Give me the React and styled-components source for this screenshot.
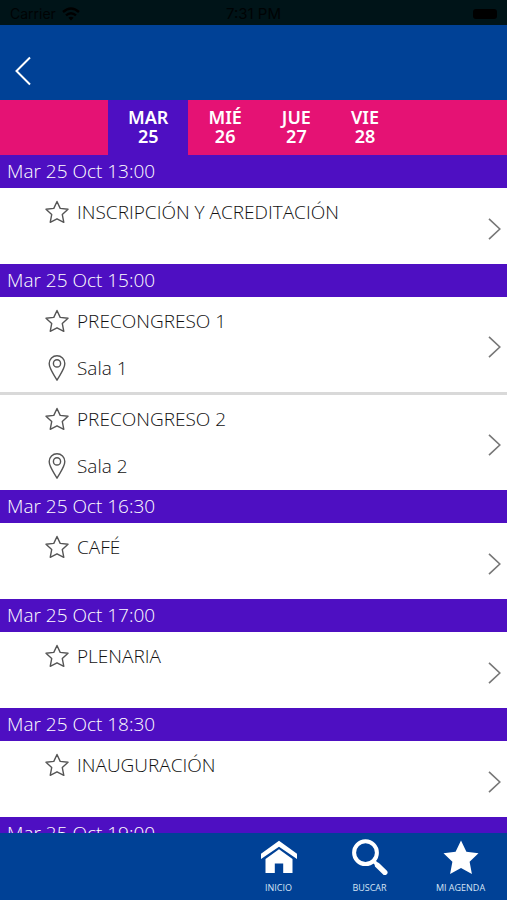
import React, { useState } from "react";
import styled, { createGlobalStyle } from "styled-components";

const days = [
  { name: "MAR", number: 25 },
  { name: "MIÉ", number: 26 },
  { name: "JUE", number: 27 },
  { name: "VIE", number: 28 },
];

const agenda = [
  { time: "Mar 25 Oct 13:00", events: [{ title: "INSCRIPCIÓN Y ACREDITACIÓN" }] },
  {
    time: "Mar 25 Oct 15:00",
    events: [
      { title: "PRECONGRESO 1", room: "Sala 1" },
      { title: "PRECONGRESO 2", room: "Sala 2" },
    ],
  },
  { time: "Mar 25 Oct 16:30", events: [{ title: "CAFÉ" }] },
  { time: "Mar 25 Oct 17:00", events: [{ title: "PLENARIA" }] },
  { time: "Mar 25 Oct 18:30", events: [{ title: "INAUGURACIÓN" }] },
  { time: "Mar 25 Oct 19:00", events: [] },
];

const StarOutline = () => (
  <svg width="24" height="24" viewBox="0 0 24 24" fill="none" stroke="#555" strokeWidth="1.4" strokeLinejoin="round">
    <path d="M12 1.5 L15.2 8.4 L23 9.3 L17.3 14.6 L18.8 22.3 L12 18.8 L5.2 22.3 L6.7 14.6 L1 9.3 L8.8 8.4 Z" />
  </svg>
);

const Pin = () => (
  <svg width="24" height="26" viewBox="0 0 24 26" fill="none" stroke="#555" strokeWidth="1.4" strokeLinejoin="round">
    <path d="M12 25.2 C9 19.5 4.2 14 4.2 8.6 A7.8 7.8 0 0 1 19.8 8.6 C19.8 14 15 19.5 12 25.2 Z" />
    <circle cx="12" cy="8.4" r="3.6" />
  </svg>
);

const HomeIcon = () => (
  <svg width="36" height="36" viewBox="0 0 36 36" fill="#fff">
    <path d="M18 1.8 L36 14.8 V20 L18 7.8 L0 20 V14.8 Z" />
    <path d="M18 10.2 L31.5 20 V34 H22.2 V24.6 H13.8 V34 H4.5 V20 Z" />
  </svg>
);

const SearchIcon = () => (
  <svg width="36" height="36" viewBox="0 0 36 36" fill="none" stroke="#fff">
    <circle cx="13.5" cy="13.7" r="11.4" strokeWidth="4" />
    <path d="M21.5 22 L25 25.6" strokeWidth="3.6" />
    <path d="M25.6 26.4 L32.8 33.4" strokeWidth="5.4" strokeLinecap="round" />
  </svg>
);

const StarIcon = () => (
  <svg width="36" height="36" viewBox="0 0 36 36" fill="#fff">
    <path d="M18 1.5 L23.4 12.8 L35.5 14.3 L26.6 22.7 L28.9 35 L18 29 L7.1 35 L9.4 22.7 L0.5 14.3 L12.6 12.8 Z" />
  </svg>
);

const App = () => {
  const [selected, setSelected] = useState(25);

  return (
    <React.Fragment>
      <GlobalStyle />
      <Screen>
        <StatusBar>
          <Carrier>
            <span>Carrier</span>
            <svg width="18" height="14" viewBox="0 0 18 14" fill="none" stroke="#000" strokeWidth="2.4">
              <path d="M1 5 Q9 -2 17 5" />
              <path d="M4 8.4 Q9 4 14 8.4" />
              <path d="M9 13.5 L6.4 10.8 Q9 8.6 11.6 10.8 Z" fill="#000" stroke="none" />
            </svg>
          </Carrier>
          <Clock>7:31 PM</Clock>
          <BatteryWrap>
            <Battery />
          </BatteryWrap>
        </StatusBar>

        <Header>
          <BackButton aria-label="Volver">
            <svg width="16" height="30" viewBox="0 0 16 30" fill="none" stroke="#fff" strokeWidth="2">
              <path d="M15 1.5 L1.5 15 L15 28.5" />
            </svg>
          </BackButton>
        </Header>

        <Days>
          {days.map((day) => (
            <Day
              key={day.number}
              $active={day.number === selected}
              onClick={() => setSelected(day.number)}
            >
              {day.name}
              <br />
              {day.number}
            </Day>
          ))}
        </Days>

        <Agenda>
          {agenda.map((slot) => (
            <section key={slot.time}>
              <Time>{slot.time}</Time>
              {slot.events.map((event) => (
                <Event key={event.title}>
                  <Details>
                    <Line>
                      <Favorite aria-label={`Favorito ${event.title}`}>
                        <StarOutline />
                      </Favorite>
                      <span>{event.title}</span>
                    </Line>
                    {event.room && (
                      <Line>
                        <Pin />
                        <span>{event.room}</span>
                      </Line>
                    )}
                  </Details>
                  <More href="#" aria-label={event.title}>
                    <svg width="13" height="22" viewBox="0 0 13 22" fill="none" stroke="#777" strokeWidth="1.6">
                      <path d="M1 0.8 L11.8 11 L1 21.2" />
                    </svg>
                  </More>
                </Event>
              ))}
            </section>
          ))}
        </Agenda>

        <BottomNav>
          <NavLink href="#">
            <HomeIcon />
            <span>INICIO</span>
          </NavLink>
          <NavLink href="#">
            <SearchIcon />
            <span>BUSCAR</span>
          </NavLink>
          <NavLink href="#">
            <StarIcon />
            <span>MI AGENDA</span>
          </NavLink>
        </BottomNav>
      </Screen>
    </React.Fragment>
  );
};

export default App;

const GlobalStyle = createGlobalStyle`
  * {
    box-sizing: border-box;
  }

  body {
    margin: 0;
    font-family: "Open Sans", "Noto Sans", sans-serif;
  }

  button {
    font-family: inherit;
    border: none;
    padding: 0;
    background: none;
    cursor: pointer;
  }

  svg {
    display: block;
    flex-shrink: 0;
  }
`;

const Screen = styled.div`
  height: 100vh;
  display: flex;
  flex-direction: column;
  background: #fff;
`;

const StatusBar = styled.div`
  flex-shrink: 0;
  height: 25px;
  padding: 2px 10px 0;
  display: grid;
  grid-template-columns: 1fr auto 1fr;
  align-items: center;
  background: #001418;
  color: #000304;
  font-family: Inter, sans-serif;
  font-size: 14px;
`;

const Carrier = styled.div`
  display: flex;
  align-items: center;
  gap: 6px;
`;

const Clock = styled.span`
  font-size: 15px;
`;

const BatteryWrap = styled.div`
  display: flex;
  justify-content: flex-end;
`;

const Battery = styled.div`
  width: 24px;
  height: 10px;
  border-radius: 3px;
  background: #000;
`;

const Header = styled.header`
  flex-shrink: 0;
  height: 75px;
  padding: 16px 15px 0;
  display: flex;
  align-items: center;
  background: #004196;
`;

const BackButton = styled.button`
  display: flex;
`;

const Days = styled.nav`
  flex-shrink: 0;
  height: 55px;
  display: flex;
  justify-content: center;
  background: #e51274;
`;

const Day = styled.button`
  padding: 0 20px 2px;
  color: #fff;
  font-family: "Noto Sans", sans-serif;
  font-size: 18px;
  font-weight: 600;
  line-height: 19px;
  text-align: center;
  background: ${({ $active }) => ($active ? "#4e0fc2" : "transparent")};
`;

const Agenda = styled.main`
  flex: 1;
  min-height: 0;
  overflow: hidden;
`;

const Time = styled.h2`
  margin: 0;
  padding: 0 7px;
  color: #fff;
  font-size: 19px;
  font-weight: 300;
  line-height: 32px;
  border-bottom: 1px solid #4e0fc2;
  background: #4e0fc2;
`;

const Event = styled.article`
  min-height: 76px;
  padding: 10px 6px 10px 45px;
  display: flex;
  justify-content: space-between;

  & + & {
    border-top: 3px solid #d9d9d9;
  }
`;

const Details = styled.div`
  display: flex;
  flex-direction: column;
  gap: 19px;
`;

const Line = styled.div`
  height: 28px;
  display: flex;
  align-items: center;
  gap: 8px;
  color: #111;
  font-size: 19px;
  font-weight: 300;
  line-height: 28px;
`;

const Favorite = styled.button`
  display: flex;
`;

const More = styled.a`
  padding-top: 5px;
  display: flex;
  align-items: center;
`;

const BottomNav = styled.nav`
  flex-shrink: 0;
  height: 67px;
  padding-right: 1px;
  display: flex;
  justify-content: flex-end;
  background: #004196;
`;

const NavLink = styled.a`
  width: 91px;
  padding-top: 6px;
  display: flex;
  flex-direction: column;
  align-items: center;
  gap: 6px;
  color: #d5e4f5;
  font-size: 9px;
  line-height: 14px;
  text-decoration: none;
`;
